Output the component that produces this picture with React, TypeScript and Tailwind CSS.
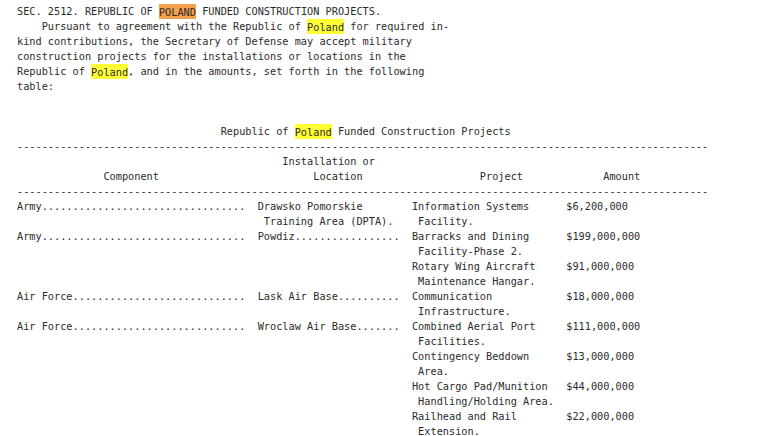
import React from "react";

type Seg = { t: string; hl?: "o" | "y" };

function cols(parts: [number, string][]): string {
  let s = "";
  for (const [c, t] of parts) {
    while (s.length < c) s += " ";
    s += t;
  }
  return s;
}

function dots(t: string, end: number): string {
  let s = t;
  while (s.length < end) s += ".";
  return s;
}

const DASH = "-".repeat(112);

const lines: Seg[][] = [
  [{ t: "SEC. 2512. REPUBLIC OF " }, { t: "POLAND", hl: "o" }, { t: " FUNDED CONSTRUCTION PROJECTS." }],
  [{ t: "    Pursuant to agreement with the Republic of " }, { t: "Poland", hl: "y" }, { t: " for required in-" }],
  [{ t: "kind contributions, the Secretary of Defense may accept military" }],
  [{ t: "construction projects for the installations or locations in the" }],
  [{ t: "Republic of " }, { t: "Poland", hl: "y" }, { t: ", and in the amounts, set forth in the following" }],
  [{ t: "table:" }],
  [{ t: "" }],
  [{ t: "" }],
  [{ t: " ".repeat(33) + "Republic of " }, { t: "Poland", hl: "y" }, { t: " Funded Construction Projects" }],
  [{ t: DASH }],
  [{ t: cols([[43, "Installation or"]]) }],
  [{ t: cols([[14, "Component"], [48, "Location"], [75, "Project"], [95, "Amount"]]) }],
  [{ t: DASH }],
  [{ t: cols([[0, dots("Army", 37)], [39, "Drawsko Pomorskie"], [64, "Information Systems"], [89, "$6,200,000"]]) }],
  [{ t: cols([[40, "Training Area (DPTA)."], [65, "Facility."]]) }],
  [{ t: cols([[0, dots("Army", 37)], [39, dots("Powdiz", 23)], [64, "Barracks and Dining"], [89, "$199,000,000"]]) }],
  [{ t: cols([[65, "Facility-Phase 2."]]) }],
  [{ t: cols([[64, "Rotary Wing Aircraft"], [89, "$91,000,000"]]) }],
  [{ t: cols([[65, "Maintenance Hangar."]]) }],
  [{ t: cols([[0, dots("Air Force", 37)], [39, dots("Lask Air Base", 23)], [64, "Communication"], [89, "$18,000,000"]]) }],
  [{ t: cols([[65, "Infrastructure."]]) }],
  [{ t: cols([[0, dots("Air Force", 37)], [39, dots("Wroclaw Air Base", 23)], [64, "Combined Aerial Port"], [89, "$111,000,000"]]) }],
  [{ t: cols([[65, "Facilities."]]) }],
  [{ t: cols([[64, "Contingency Beddown"], [89, "$13,000,000"]]) }],
  [{ t: cols([[65, "Area."]]) }],
  [{ t: cols([[64, "Hot Cargo Pad/Munition"], [89, "$44,000,000"]]) }],
  [{ t: cols([[65, "Handling/Holding Area."]]) }],
  [{ t: cols([[64, "Railhead and Rail"], [89, "$22,000,000"]]) }],
  [{ t: cols([[65, "Extension."]]) }],
];

export default function App() {
  return (
    <div className="w-[780px] h-[436px] overflow-hidden bg-white">
      <pre className="pl-[17px] pt-[4px] m-0 text-[10.25px] leading-[15px] text-[#2b2b2b] font-['DejaVu_Sans_Mono',monospace]">
        {lines.map((segs, i) => (
          <div key={i} className="h-[15px] whitespace-pre">
            {segs.map((s, j) =>
              s.hl === "o" ? (
                <span key={j} className="bg-[#f5a04c] py-[1.5px]">{s.t}</span>
              ) : s.hl === "y" ? (
                <span key={j} className="bg-[#ffff33] py-[1.5px]">{s.t}</span>
              ) : (
                <span key={j}>{s.t}</span>
              )
            )}
          </div>
        ))}
      </pre>
    </div>
  );
}
